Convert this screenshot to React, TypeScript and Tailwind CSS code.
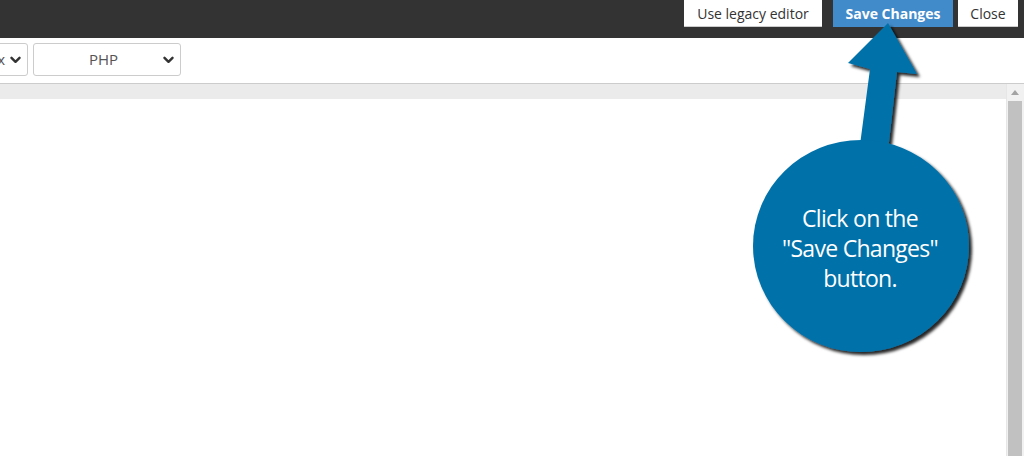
import React from "react";

function Chevron() {
  return (
    <svg width="11" height="8" viewBox="0 0 11 8" className="shrink-0">
      <path d="M1.5 1.8 L5.5 5.8 L9.5 1.8" fill="none" stroke="#333" strokeWidth="2.4" strokeLinecap="round" strokeLinejoin="round" />
    </svg>
  );
}

function Callout() {
  return (
    <div className="absolute left-0 top-0 w-[1024px] h-[456px] pointer-events-none">
      <svg width="1024" height="456" className="absolute left-0 top-0">
        <defs>
          <filter id="sh" x="-20%" y="-20%" width="140%" height="140%">
            <feDropShadow dx="3" dy="3" stdDeviation="1.8" floodColor="#000" floodOpacity="0.85" />
          </filter>
        </defs>
        <g filter="url(#sh)" fill="#0071a9">
          <polygon points="888,23 917,74 897,72 887,160 858,160 870,69 848,63" />
          <ellipse cx="861" cy="246" rx="108" ry="106" />
        </g>
      </svg>
      <div
        className="absolute left-[760px] top-[203px] w-[200px] text-center text-white text-[23px] leading-[30px] tracking-[-0.7px]"
        style={{ fontFamily: '"Open Sans", sans-serif' }}
      >
        <div>Click on the</div>
        <div>"Save Changes"</div>
        <div>button.</div>
      </div>
    </div>
  );
}

export default function App() {
  return (
    <div
      className="relative w-[1024px] h-[456px] overflow-hidden bg-white text-[#333]"
      style={{ fontFamily: '"Open Sans", sans-serif' }}
    >
      {/* top bar */}
      <div className="h-[38px] bg-[#333333] flex justify-end items-start pr-[6px]">
        <button className="h-[27px] px-[13px] bg-white border-b border-[#ccc] text-[14px] leading-[21px] text-[#333] w-[138px]">
          Use legacy editor
        </button>
        <button className="ml-[11px] h-[27px] w-[120px] bg-[#428bca] text-[14px] leading-[21px] font-bold text-white">
          Save Changes
        </button>
        <button className="ml-[5px] h-[27px] w-[60px] bg-white border-b border-[#ccc] text-[14px] leading-[21px] text-[#333]">
          Close
        </button>
      </div>

      {/* selects */}
      <div className="h-[45px] flex items-start pt-[5px] -ml-[52px] gap-[5px]">
        <div className="h-[33px] w-[80px] border border-[#ccc] rounded-[3px] flex items-center justify-end gap-[5px] pr-[6px] text-[15px] text-[#555]">
          <span>Linux</span>
          <Chevron />
        </div>
        <div className="h-[33px] w-[148px] border border-[#ccc] rounded-[3px] flex items-center pl-[10px] pr-[6px] text-[15px] text-[#555]">
          <span className="flex-1 text-center">PHP</span>
          <Chevron />
        </div>
      </div>

      {/* editor */}
      <div className="border-t border-[#ccc] flex h-[373px]">
        <div className="flex-1 flex flex-col">
          <div className="h-[15px] bg-[#ebebeb]" />
          <div className="flex-1 bg-white" />
        </div>
        <div className="w-[18px] bg-[#f1f1f1] border-l border-[#e6e6e6] flex flex-col items-start pl-[1px]">
          <div className="h-[17px] w-[14px] flex items-center justify-center">
            <svg width="8" height="5" viewBox="0 0 8 5">
              <polygon points="4,0 8,5 0,5" fill="#a3a3a3" />
            </svg>
          </div>
          <div className="flex-1 w-[14px] bg-[#c1c1c1]" />
        </div>
      </div>

      <Callout />
    </div>
  );
}
